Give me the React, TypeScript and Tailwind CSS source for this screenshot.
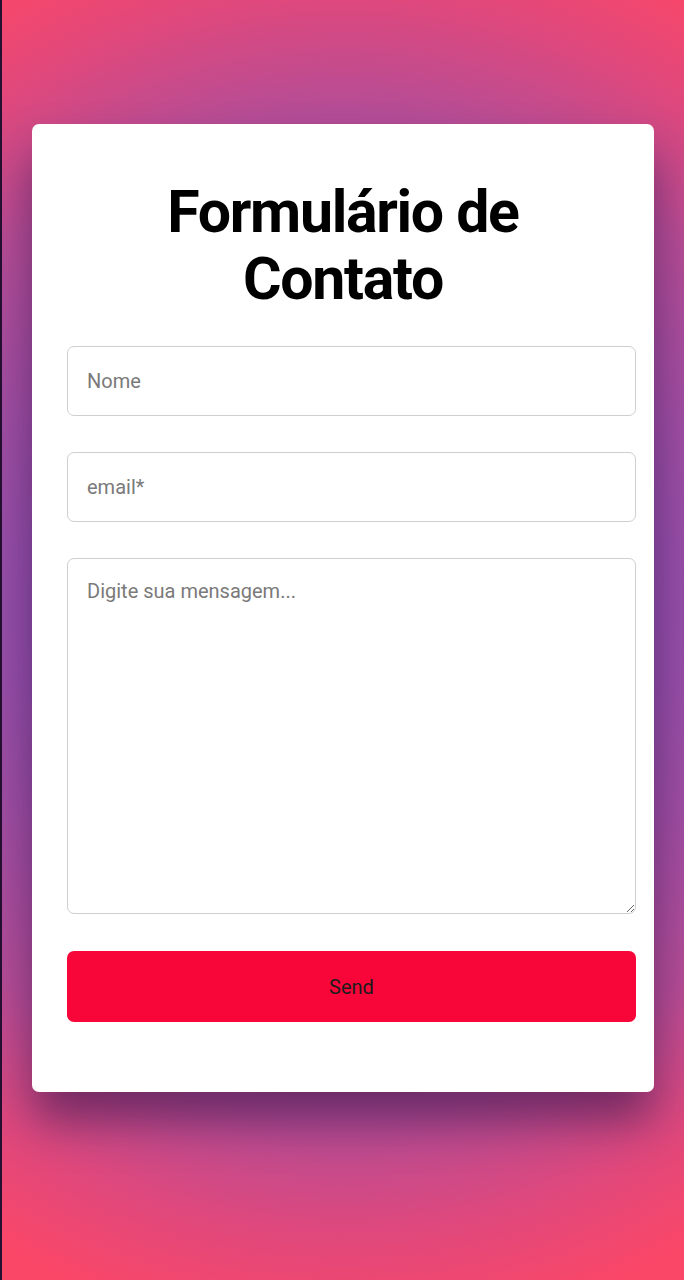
export default function App() {
  return (
    <div className="min-h-[1280px] w-full border-l-2 border-[#241030] bg-[radial-gradient(ellipse_700px_720px_at_50%_48%,#7d4fb3_0%,#8a4faf_40%,#b54d96_70%,#df487c_86%,#fa4768_100%)] font-['Roboto',sans-serif] pt-[124px]">
      <div className="ml-[30px] w-[622px] rounded-[7px] bg-white pl-[35px] pr-[18px] pt-[54px] pb-[70px] shadow-[0_30px_45px_-2px_rgba(60,20,70,0.6)]">
        <h1 className="w-[552px] text-center text-[59px] font-bold leading-[67px] tracking-[-1.3px] text-black">
          Formulário de Contato
        </h1>
        <form className="mt-[34px] flex flex-col gap-[37px]">
          <input
            type="text"
            placeholder="Nome"
            className="h-[70px] w-[569px] rounded-[7px] border border-[#cfcfcf] px-[19px] text-[20px] text-black outline-none placeholder:text-[#7a7a7a]"
          />
          <input
            type="email"
            placeholder="email*"
            className="-mt-px h-[70px] w-[569px] rounded-[7px] border border-[#cfcfcf] px-[19px] text-[20px] text-black outline-none placeholder:text-[#7a7a7a]"
          />
          <textarea
            placeholder="Digite sua mensagem..."
            className="-mt-px h-[356px] w-[569px] rounded-[7px] border border-[#cfcfcf] px-[19px] py-[20px] text-[20px] leading-[24px] text-black outline-none placeholder:text-[#7a7a7a]"
          />
          <button
            type="button"
            className="h-[71px] w-[569px] rounded-[7px] bg-[#f80639] text-[20px] text-[#1b1b1b]"
          >
            Send
          </button>
        </form>
      </div>
    </div>
  );
}
